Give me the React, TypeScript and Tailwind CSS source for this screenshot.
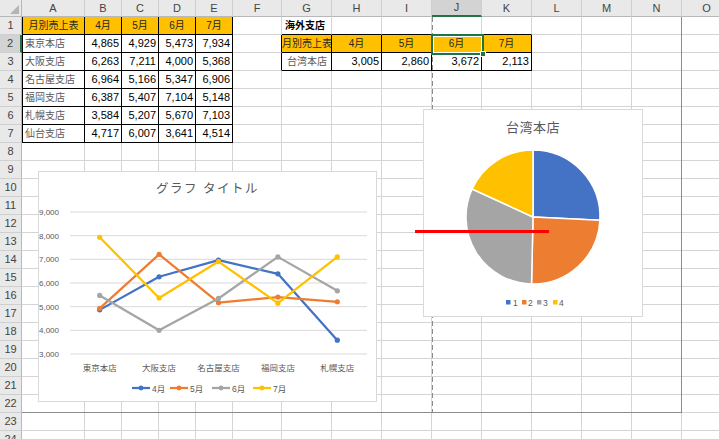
import React from 'react';

const COLS: [string, number][] = [
  ['A', 63], ['B', 37], ['C', 37], ['D', 37], ['E', 37], ['F', 49], ['G', 50], ['H', 50],
  ['I', 50], ['J', 50], ['K', 50], ['L', 50], ['M', 50], ['N', 50], ['O', 50],
];
const ROWS = 24;

const stores: [string, number, number, number, number][] = [
  ['東京本店', 4865, 4929, 5473, 7934],
  ['大阪支店', 6263, 7211, 4000, 5368],
  ['名古屋支店', 6964, 5166, 5347, 6906],
  ['福岡支店', 6387, 5407, 7104, 5148],
  ['札幌支店', 3584, 5207, 5670, 7103],
  ['仙台支店', 4717, 6007, 3641, 4514],
];
const months = ['4月', '5月', '6月', '7月'];
const taiwan = [3005, 2860, 3672, 2113];

type Kind = 'hdr' | 'hdrL' | 'name' | 'nameG' | 'num' | 'bold';
type Spec = { t: string; kind: Kind; fill?: boolean };

const fmt = (n: number) => n.toLocaleString('en-US');

// cell contents, keyed by "col,row" (col 0 = A)
const cells: Record<string, Spec> = {};
cells['0,1'] = { t: '月別売上表', kind: 'hdr', fill: true };
months.forEach((m, i) => (cells[`${i + 1},1`] = { t: m, kind: 'hdr', fill: true }));
stores.forEach((s, r) => {
  cells[`0,${r + 2}`] = { t: s[0], kind: 'name' };
  for (let i = 1; i <= 4; i++) cells[`${i},${r + 2}`] = { t: fmt(s[i] as number), kind: 'num' };
});
cells['6,1'] = { t: '海外支店', kind: 'bold' };
cells['6,2'] = { t: '月別売上表', kind: 'hdrL', fill: true };
months.forEach((m, i) => (cells[`${i + 7},2`] = { t: m, kind: 'hdr', fill: true }));
cells['6,3'] = { t: '台湾本店', kind: 'nameG' };
taiwan.forEach((v, i) => (cells[`${i + 7},3`] = { t: fmt(v), kind: 'num' }));

const kindCls: Record<Kind, string> = {
  hdr: 'justify-center text-[10px] text-[#262626]',
  hdrL: 'justify-start text-[10px] text-[#262626]',
  name: 'justify-start pl-[2px] text-[10px] text-[#5a5a5a]',
  nameG: 'justify-start pl-[5px] text-[10px] text-[#5a5a5a]',
  num: 'justify-end pr-[2px] text-[11px] text-black',
  bold: 'justify-start pl-[3px] text-[10px] font-bold text-black',
};

function Cell({ c, r }: { c: number; r: number }) {
  const spec = cells[`${c},${r}`];
  const inA = c <= 4 && r <= 7;
  const inG = c >= 6 && c <= 10 && r >= 2 && r <= 3;
  const rBlack = inA || inG || (c === 5 && (r === 2 || r === 3));
  const bBlack = inA || (c >= 6 && c <= 10 && r >= 1 && r <= 3);
  const lBlack = c === 0 && r <= 7;
  return (
    <div
      className={[
        'flex items-center overflow-hidden whitespace-nowrap leading-none border-r border-b',
        rBlack ? 'border-r-black' : 'border-r-[#d4d4d4]',
        bBlack ? 'border-b-black' : 'border-b-[#d4d4d4]',
        lBlack ? 'border-l border-l-black' : '',
        spec?.fill ? 'bg-[#ffc000]' : 'bg-white',
        spec ? kindCls[spec.kind] : '',
      ].join(' ')}
    >
      {spec?.t}
    </div>
  );
}

const series = [
  { name: '4月', color: '#4472c4', vals: [4865, 6263, 6964, 6387, 3584], lx: 94 },
  { name: '5月', color: '#ed7d31', vals: [4929, 7211, 5166, 5407, 5207], lx: 132 },
  { name: '6月', color: '#a5a5a5', vals: [5473, 4000, 5347, 7104, 5670], lx: 174 },
  { name: '7月', color: '#ffc000', vals: [7934, 5368, 6906, 5148, 7103], lx: 215 },
];

function LineChart() {
  const x0 = 32;
  const x1 = 329;
  const band = (x1 - x0) / 5;
  const px = (i: number) => x0 + band * (i + 0.5);
  const py = (v: number) => 183 - ((v - 3000) * 142) / 6000;
  const ticks = [9000, 8000, 7000, 6000, 5000, 4000, 3000];
  const cats = stores.slice(0, 5).map((s) => s[0]);
  return (
    <div className="absolute left-[38px] top-[171px] w-[339px] h-[231px] border border-[#d9d9d9] bg-white">
      <svg width={337} height={229} className="block">
        <g transform="translate(-1,-1)" fontFamily="'Liberation Sans','Noto Sans CJK JP',sans-serif">
          <text x={169.5} y={21.5} textAnchor="middle" fontSize={12.5} letterSpacing={1.5} fill="#595959">
            グラフ タイトル
          </text>
          {ticks.map((t) => (
            <g key={t}>
              <line x1={x0} x2={x1} y1={py(t)} y2={py(t)} stroke="#d9d9d9" strokeWidth={1} />
              <text x={21} y={py(t) + 3} textAnchor="end" fontSize={8} fill="#595959">
                {fmt(t)}
              </text>
            </g>
          ))}
          {cats.map((c, i) => (
            <text key={c} x={px(i)} y={199.5} textAnchor="middle" fontSize={8.5} fill="#595959">
              {c}
            </text>
          ))}
          {series.map((s) => (
            <g key={s.name}>
              <polyline
                points={s.vals.map((v, i) => `${px(i)},${py(v)}`).join(' ')}
                fill="none"
                stroke={s.color}
                strokeWidth={2.25}
                strokeLinejoin="round"
                strokeLinecap="round"
              />
              {s.vals.map((v, i) => (
                <circle key={i} cx={px(i)} cy={py(v)} r={2.6} fill={s.color} />
              ))}
              <line x1={s.lx} x2={s.lx + 18} y1={217} y2={217} stroke={s.color} strokeWidth={2.25} />
              <circle cx={s.lx + 9} cy={217} r={2.4} fill={s.color} />
              <text x={s.lx + 20} y={220.5} fontSize={8.5} fill="#595959">
                {s.name}
              </text>
            </g>
          ))}
        </g>
      </svg>
    </div>
  );
}

function PieChart() {
  const cx = 110;
  const cy = 108;
  const r = 67;
  const total = taiwan.reduce((a, b) => a + b, 0);
  const colors = ['#4472c4', '#ed7d31', '#a5a5a5', '#ffc000'];
  const pt = (deg: number) => {
    const a = (deg * Math.PI) / 180;
    return [cx + r * Math.sin(a), cy - r * Math.cos(a)];
  };
  let acc = 0;
  const slices = taiwan.map((v, i) => {
    const a0 = (acc / total) * 360;
    acc += v;
    const a1 = (acc / total) * 360;
    const [sx, sy] = pt(a0);
    const [ex, ey] = pt(a1);
    const large = a1 - a0 > 180 ? 1 : 0;
    return { d: `M${cx},${cy} L${sx},${sy} A${r},${r} 0 ${large} 1 ${ex},${ey} Z`, color: colors[i] };
  });
  const legend = [
    { sq: 83, tx: 90 },
    { sq: 99, tx: 105 },
    { sq: 114, tx: 120 },
    { sq: 130, tx: 136 },
  ];
  return (
    <div className="absolute left-[423px] top-[109px] w-[220px] h-[208px] border border-[#d9d9d9] bg-white">
      <svg width={218} height={206} className="block">
        <g transform="translate(-1,-1)" fontFamily="'Liberation Sans','Noto Sans CJK JP',sans-serif">
          <text x={110} y={22.5} textAnchor="middle" fontSize={13} letterSpacing={0.5} fill="#595959">
            台湾本店
          </text>
          {slices.map((s, i) => (
            <path key={i} d={s.d} fill={s.color} stroke="#ffffff" strokeWidth={1.5} strokeLinejoin="round" />
          ))}
          {legend.map((l, i) => (
            <g key={i}>
              <rect x={l.sq} y={191} width={4.5} height={4.5} fill={colors[i]} />
              <text x={l.tx} y={197} fontSize={8.5} fill="#595959">
                {i + 1}
              </text>
            </g>
          ))}
        </g>
      </svg>
    </div>
  );
}

export default function App() {
  return (
    <div className="relative w-[719px] h-[439px] overflow-hidden bg-white font-['Liberation_Sans','Noto_Sans_CJK_JP',sans-serif]">
      <div className="grid grid-cols-[22px_63px_37px_37px_37px_37px_49px_50px_50px_50px_50px_50px_50px_50px_50px_50px] grid-rows-[17px_repeat(24,18px)]">
        {/* corner */}
        <div className="bg-[#e9e9e9] border-r border-b border-r-[#b8b8b8] border-b-[#b8b8b8]">
          <svg width={21} height={16} className="block">
            <polygon points="19,5 19,14 10,14" fill="#b4b4b4" />
          </svg>
        </div>
        {COLS.map(([name], c) => (
          <div
            key={name}
            className={[
              'flex items-center justify-center text-[11px] text-[#444] border-r border-r-[#cfcfcf]',
              c === 9 ? 'bg-[#d3d3d3] border-b-2 border-b-[#217346]' : 'bg-[#e9e9e9] border-b border-b-[#b8b8b8]',
            ].join(' ')}
          >
            {name}
          </div>
        ))}
        {Array.from({ length: ROWS }, (_, i) => i + 1).map((r) => (
          <React.Fragment key={r}>
            <div
              className={[
                'flex items-center justify-center text-[11px] text-[#444] border-b border-b-[#cfcfcf]',
                r === 2 ? 'bg-[#d3d3d3] border-r-2 border-r-[#217346]' : 'bg-[#e9e9e9] border-r border-r-[#b8b8b8]',
              ].join(' ')}
            >
              {r}
            </div>
            {COLS.map(([name], c) => (
              <Cell key={name} c={c} r={r} />
            ))}
          </React.Fragment>
        ))}
      </div>

      {/* page break lines */}
      <div className="absolute left-[432px] top-[17px] w-px h-[396px] bg-[repeating-linear-gradient(to_bottom,#8c8c8c_0px,#8c8c8c_5px,transparent_5px,transparent_8px)]" />
      <div className="absolute left-[681px] top-[17px] w-px h-[396px] bg-[#8c8c8c]" />
      <div className="absolute left-[22px] top-[412px] w-[660px] h-px bg-[#8c8c8c]" />

      <LineChart />
      <PieChart />

      {/* active cell J2 */}
      <div className="absolute left-[431px] top-[34px] w-[53px] h-[21px] border-2 border-[#217346] shadow-[inset_0_0_0_1px_#ffffff]" />
      <div className="absolute left-[480px] top-[51px] w-[6px] h-[6px] bg-[#217346] border border-white" />

      {/* red annotation line */}
      <div className="absolute left-[415px] top-[230px] w-[134px] h-[3px] bg-[#ff0000]" />
    </div>
  );
}
